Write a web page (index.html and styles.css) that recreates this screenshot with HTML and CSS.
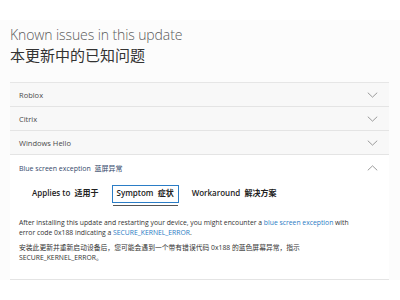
FILE: index.html
```html
<!DOCTYPE html>
<html lang="en">
<head>
<meta charset="utf-8">
<link rel="stylesheet" href="styles.css">
</head>
<body>
<div class="page">
  <header class="head">
    <h1 class="title">Known issues in this update</h1>
    <h2 class="subtitle">本更新中的已知问题</h2>
  </header>
  <div class="accordion">
    <div class="row">
      <span class="label">Roblox</span>
      <svg class="chev" viewBox="0 0 12 7" width="12" height="7"><path d="M0.5 0.8 L6 6 L11.5 0.8" /></svg>
    </div>
    <div class="row">
      <span class="label">Citrix</span>
      <svg class="chev" viewBox="0 0 12 7" width="12" height="7"><path d="M0.5 0.8 L6 6 L11.5 0.8" /></svg>
    </div>
    <div class="row">
      <span class="label">Windows Hello</span>
      <svg class="chev" viewBox="0 0 12 7" width="12" height="7"><path d="M0.5 0.8 L6 6 L11.5 0.8" /></svg>
    </div>
    <div class="item open">
      <div class="row open-row">
        <span class="label">Blue screen exception&nbsp; 蓝屏异常</span>
        <svg class="chev" viewBox="0 0 12 7" width="12" height="7"><path d="M0.5 6.2 L6 1 L11.5 6.2" /></svg>
      </div>
      <div class="tabs">
        <span class="tab">Applies to&nbsp; 适用于</span>
        <span class="tab active">Symptom&nbsp; 症状</span>
        <span class="tab">Workaround&nbsp; 解决方案</span>
      </div>
      <div class="content">
        <p>After installing this update and restarting your device, you might encounter a <a>blue screen exception</a> with error code 0x188 indicating a <a>SECURE_KERNEL_ERROR</a>.</p>
        <p>安装此更新并重新启动设备后，您可能会遇到一个带有错误代码 0x188 的蓝色屏幕异常，指示 SECURE_KERNEL_ERROR。</p>
      </div>
    </div>
  </div>
</div>
</body>
</html>
```

FILE: styles.css
```css
html, body {
  margin: 0;
  padding: 0;
  background: #ffffff;
}

body {
  font-family: "Open Sans", "Noto Sans CJK SC", sans-serif;
  color: #333;
}

.page {
  margin-top: 20px;
  background: #fcfcfc;
  padding: 5px 11px 0 10px;
}

.head {
  padding-bottom: 17px;
}

.title {
  margin: 0;
  font-weight: 300;
  font-size: 14px;
  line-height: 20px;
  color: #5a5a5a;
  letter-spacing: -0.1px;
}

.subtitle {
  margin: 0;
  font-family: "Noto Sans CJK SC", sans-serif;
  font-weight: 400;
  font-size: 15px;
  line-height: 20px;
  color: #333;
}

.accordion {
  border-top: 1px solid #e6e6e6;
}

.row {
  display: flex;
  align-items: center;
  justify-content: space-between;
  height: 23px;
  padding: 0 11px 0 9px;
  background: #f8f8f8;
  border-bottom: 1px solid #e4e4e4;
}

.label {
  font-size: 7.5px;
  color: #4a4a4a;
}

.chev {
  width: 11px;
  height: 6px;
}

.chev path {
  fill: none;
  stroke: #8a8a8a;
  stroke-width: 1;
}

.item.open {
  background: #ffffff;
  border-bottom: 1px solid #e4e4e4;
  padding-bottom: 11px;
}

.open-row {
  background: #ffffff;
  border-bottom: none;
  height: 26px;
}

.open-row .label {
  font-size: 7px;
  color: #34496b;
}

.tabs {
  display: flex;
  gap: 13px;
  padding: 4px 0 0 22px;
  align-items: stretch;
}

.tab {
  font-size: 8px;
  font-weight: 600;
  color: #222;
  padding: 3px 0;
  line-height: 10px;
  border-bottom: 2px solid transparent;
}

.tab.active {
  padding: 2px 4px;
  border: 1px solid #2b7dc6;
  box-shadow: 0 3px 0 -1px #fff, 0 4px 0 -1px #555;
}

.content {
  padding: 15px 0 0 9px;
}

.content p {
  margin: 0 0 5px 0;
  font-size: 6.8px;
  line-height: 10px;
  color: #333;
  max-width: 332px;
}

.content a {
  color: #2a7cc4;
}
```
